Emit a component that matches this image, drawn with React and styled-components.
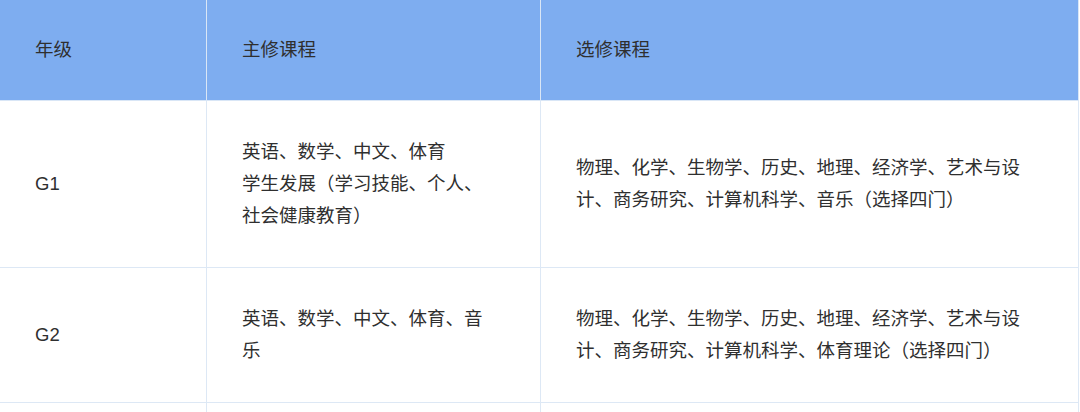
import React from 'react';
import styled, { createGlobalStyle } from 'styled-components';

const GlobalStyle = createGlobalStyle`
  html, body {
    margin: 0;
    padding: 0;
    background: #ffffff;
  }
  body {
    font-family: "Liberation Sans", "Noto Sans CJK SC", sans-serif;
    color: #333333;
  }
`;

const rows = [
  {
    grade: 'G1',
    major: ['英语、数学、中文、体育', '学生发展（学习技能、个人、社会健康教育）'],
    elective: '物理、化学、生物学、历史、地理、经济学、艺术与设计、商务研究、计算机科学、音乐（选择四门）',
  },
  {
    grade: 'G2',
    major: ['英语、数学、中文、体育、音乐'],
    elective: '物理、化学、生物学、历史、地理、经济学、艺术与设计、商务研究、计算机科学、体育理论（选择四门）',
  },
];

const Table = styled.div`
  display: grid;
  grid-template-columns: 207px 334px 538px;
  width: 1079px;
`;

const HeadCell = styled.div`
  box-sizing: border-box;
  height: 101px;
  display: flex;
  align-items: center;
  padding: 0 35px;
  background: #7eadf0;
  border-right: 1px solid #d9e6f6;
  border-bottom: 1px solid #d9e6f6;
  font-size: 18.5px;
  line-height: 32px;
  color: #2f2f2f;
`;

const Cell = styled.div`
  box-sizing: border-box;
  display: flex;
  flex-direction: column;
  justify-content: center;
  padding: 35px ${(p) => p.$padRight || 35}px 35px 35px;
  min-height: ${(p) => p.$minHeight || 0}px;
  border-right: 1px solid #dde8f5;
  border-bottom: 1px solid #dde8f5;
  font-size: 18.5px;
  line-height: 32px;
  color: #2f2f2f;
`;

const Line = styled.div`
  display: block;
`;

export default function App() {
  return (
    <>
      <GlobalStyle />
      <Table>
        <HeadCell>年级</HeadCell>
        <HeadCell>主修课程</HeadCell>
        <HeadCell>选修课程</HeadCell>
        {rows.map((r) => (
          <React.Fragment key={r.grade}>
            <Cell>{r.grade}</Cell>
            <Cell $padRight={50}>
              {r.major.map((m) => (
                <Line key={m}>{m}</Line>
              ))}
            </Cell>
            <Cell $padRight={30}>{r.elective}</Cell>
          </React.Fragment>
        ))}
        <Cell $minHeight={100} />
        <Cell $minHeight={100} />
        <Cell $minHeight={100} />
      </Table>
    </>
  );
}
